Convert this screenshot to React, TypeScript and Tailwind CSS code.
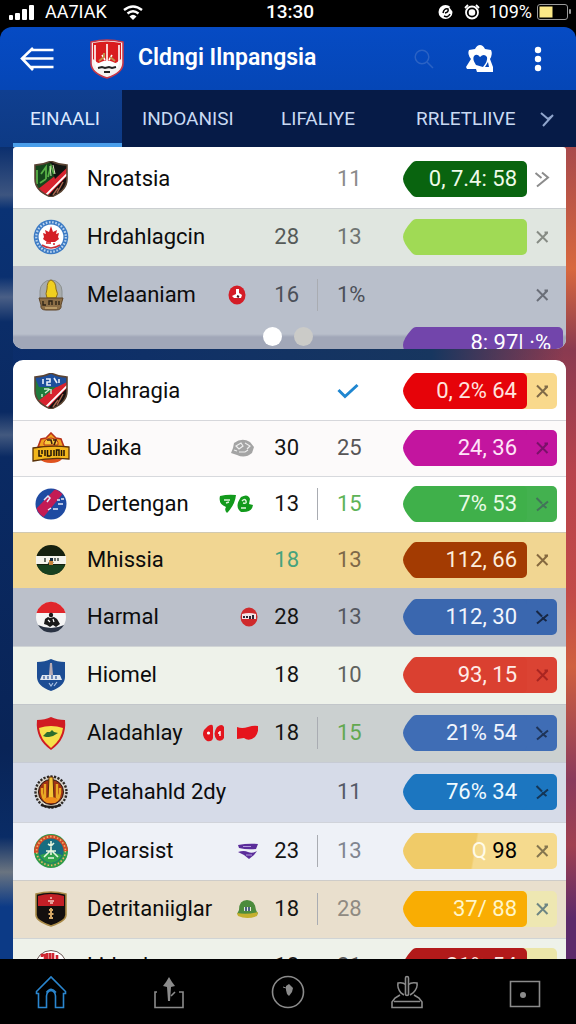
import type { ReactNode } from "react";

type Tail = "chevron" | "cross" | "arrow";

interface Row {
  name: string;
  crest: ReactNode;
  marks?: ReactNode;
  first?: string;
  firstClass?: string;
  second?: ReactNode;
  secondClass?: string;
  divider?: boolean;
  rowClass: string;
  pill?: ReactNode;
  tipClass?: string;
  pillClass?: string;
  tailClass?: string;
  tail: Tail;
  tailIconClass: string;
}

const shieldPath = "M2 4Q10 4 18 0Q26 4 34 4V18Q34 30 18 36Q2 30 2 18Z";

function StripedShield({ accent, children }: { accent: string; children: ReactNode }) {
  const id = "shield" + accent.slice(1);
  return (
    <svg viewBox="0 0 36 36" className="size-9" aria-hidden="true">
      <clipPath id={id}>
        <path d={shieldPath} />
      </clipPath>
      <g clipPath={"url(#" + id + ")"}>
        <path d="M0 0H36V36H0Z" fill={accent} />
        <path d="M36 6V36H8Z" fill="#17100f" />
        <path d="M36 4V13L14 36H4L0 32Z" fill="#d8232f" />
        <path d="M35 12L12 35" stroke="#fff" strokeWidth="1.8" />
        <path d="M30 21l-6 11M25 27l-5 7" stroke="#a8664e" strokeWidth="1.4" />
        {children}
      </g>
      <path d={shieldPath} fill="none" stroke="#5b4434" strokeWidth="1.6" />
    </svg>
  );
}

const crests = {
  green: (
    <StripedShield accent="#14461c">
      <path d="M16 0h20v5L22 18Z" fill="#131512" />
      <path d="M8 13l5-7v12M15 16l3-11 3 8M7 22l6-4M4 9v14" stroke="#58b048" strokeWidth="1.8" fill="none" />
      <path d="M17 5l1 10M20 4l2 9" stroke="#d6e4b8" strokeWidth="1" />
    </StripedShield>
  ),
  blue: (
    <StripedShield accent="#1f7a3c">
      <path d="M0 0h36v8L24 14H6Z" fill="#1e4f9c" />
      <path d="M10 6v5M13 6h4v3h-3v3h4M21 5l3 5M26 6v4" stroke="#e6eefa" strokeWidth="1.6" fill="none" />
      <path d="M11 16h5M12 20l5-4M18 16v5M9 21v3" stroke="#cdeccd" strokeWidth="1.4" />
    </StripedShield>
  ),
  maple: (
    <svg viewBox="0 0 36 36" className="size-9" aria-hidden="true">
      <circle cx="18" cy="18" r="17.3" fill="#3b7ac4" />
      <circle cx="18" cy="18" r="14.8" fill="none" stroke="#b9d3ee" strokeWidth="2.2" strokeDasharray="1.6 1.6" />
      <circle cx="18" cy="18" r="12.4" fill="#fff" />
      <path d="M18 7l2 6 4-2-1 4 3-1-1 4 1 2-4 3-8 0-4-3 1-2-1-4 3 1-1-4 4 2Z" fill="#d41f26" />
      <path d="M17 22v3M13 24h3M20 25h2" stroke="#d41f26" strokeWidth="1.6" />
      <path d="M9 26Q18 32 27 26" stroke="#c8323b" strokeWidth="1.6" fill="none" />
    </svg>
  ),
  cone: (
    <svg viewBox="0 0 36 36" className="size-9" aria-hidden="true">
      <path d="M7 22V14a11 11 0 0122 0v8Z" fill="#a8acac" stroke="#8c9190" />
      <path d="M18 3q5 2 5 9 3 5 0 9h-9q-2-4 0-9 0-8 4-9Z" fill="#f0cf1e" stroke="#8c6d18" />
      <path d="M6 21h24l-2 7q1 5-5 5H13q-6 0-5-5Z" fill="#8d6f47" stroke="#5e4528" />
      <path d="M10 24v4h3M16 28v-4h3v4M23 24v4M26 24v4" stroke="#2e2417" strokeWidth="1.4" fill="none" />
      <path d="M12 31h12" stroke="#c9a970" strokeWidth="1.3" />
    </svg>
  ),
  crown: (
    <svg viewBox="0 0 38 32" className="h-8 w-[38px]" aria-hidden="true">
      <path d="M19 1l5 5 5 1 3 8H6l3-8 5-1Z" fill="#f0a21e" stroke="#b8321b" strokeWidth="1.6" />
      <path d="M8 27h22q-3 4-11 4T8 27Z" fill="#e0531f" />
      <path d="M12 13q-1-6 7-7 8 1 7 7Z" fill="#f7c93b" stroke="#b8321b" />
      <path d="M15 8h4l1 4M21 8h3l-2 5" stroke="#3d1d10" strokeWidth="1.6" fill="none" />
      <path d="M1 16Q19 13 37 15V27Q19 25 1 29Z" fill="#f2b61c" stroke="#5a3209" strokeWidth="1.3" />
      <path d="M7 18v6h3M10 18v4M13 18v6M15.500 18v6h3M19 18v6M22 18v6M24.500 24v-6h2.500v6M29.500 18v6M32 18v6" stroke="#221407" strokeWidth="1.500" fill="none" />
    </svg>
  ),
  slash: (
    <svg viewBox="0 0 36 36" className="size-9" aria-hidden="true">
      <clipPath id="slashClip">
        <circle cx="18" cy="18" r="15" />
      </clipPath>
      <circle cx="18" cy="18" r="15.500" fill="#1f4ba2" />
      <g clipPath="url(#slashClip)">
        <path d="M25 0l7 5L9 33 0 26Z" fill="#c31b54" />
        <path d="M11 14l4-4 2 2-3 4M24 14h3M28 13h3M25 18h5M15 24l3-2M20 23h5" stroke="#e5e9f8" strokeWidth="1.500" fill="none" />
      </g>
    </svg>
  ),
  band: (
    <svg viewBox="0 0 36 36" className="size-9" aria-hidden="true">
      <circle cx="18" cy="18" r="15" fill="#16210f" />
      <path d="M4 23H32A15 15 0 0118 33 15 15 0 014 23Z" fill="#17401f" />
      <path d="M3 14H33V22H3Z" fill="#f5f3ec" />
      <path d="M12 16v4M15 21q4 2 5-1M22 16v3M25 16v3" stroke="#3d4a42" strokeWidth="1.500" fill="none" />
      <path d="M16 18h4v5h-4Z" fill="#c7843c" />
      <path d="M17 16h3v3h-3Z" fill="#152a3a" />
    </svg>
  ),
  redTop: (
    <svg viewBox="0 0 36 36" className="size-9" aria-hidden="true">
      <circle cx="18" cy="18" r="15" fill="#f5f5f5" />
      <path d="M3.500 14A15 15 0 0132.500 14Z" fill="#e0262b" />
      <path d="M5 26A15 15 0 0031 26Q18 32 5 26Z" fill="#2a3343" />
      <circle cx="18" cy="16" r="2.200" fill="#191919" />
      <path d="M12 20l3-2 2 1 4-1 3 2 3 5-4 3-3-2-3 2-3-2-3-1Z" fill="#191919" />
      <path d="M15 21l2 2M20 20l1 3" stroke="#fff" strokeWidth="1.200" />
    </svg>
  ),
  blueShield: (
    <svg viewBox="0 0 36 36" className="size-9" aria-hidden="true">
      <path d="M4 5Q12 5 18 2Q24 5 32 5V20Q32 29 18 34Q4 29 4 20Z" fill="#1c4d94" />
      <path d="M17 6h2l1 12h-4Z" fill="#b7abb4" />
      <path d="M9 18h18l2 5H7Z" fill="#dfe5ef" />
      <path d="M11 19v3M15 19v3M19 18v4M23 19v3" stroke="#4064a0" strokeWidth="1.4" />
      <path d="M16 26l2 3 2-3M24 25l-3 4" stroke="#a9c1e4" strokeWidth="1.2" fill="none" />
    </svg>
  ),
  redYellow: (
    <svg viewBox="0 0 36 36" className="size-9" aria-hidden="true">
      <path d="M4 5Q12 5 18 2Q24 5 32 5Q34 24 18 35Q2 24 4 5Z" fill="#d01b22" />
      <path d="M6 13Q18 9 30 13Q29 24 18 33Q7 24 6 13Z" fill="#f6e04a" />
      <path d="M10 21l4-4 3 0 2-2 2 2 4 1-5 3-4 1-3 0Z" fill="#2c6e2d" />
    </svg>
  ),
  torch: (
    <svg viewBox="0 0 36 36" className="size-9" aria-hidden="true">
      <circle cx="18" cy="18" r="15.500" fill="#d9d3c8" stroke="#2d2926" strokeWidth="2.400" strokeDasharray="2.200 1.400" />
      <circle cx="18" cy="18" r="12.500" fill="#a03214" stroke="#2b1a12" />
      <path d="M9 14q-1 11 6 14M27 14q1 11-6 14M12 10v14M24 10v14" stroke="#e9a824" strokeWidth="2.400" fill="none" />
      <path d="M16 3h4l1 22h-6Z" fill="#f5c535" stroke="#5a2711" />
      <path d="M11 25q7-4 14 0l-3 4h-8Z" fill="#f08d1b" />
      <path d="M8 31Q18 35 28 31" stroke="#211d1b" strokeWidth="2.400" fill="none" />
    </svg>
  ),
  greenRound: (
    <svg viewBox="0 0 36 36" className="size-9" aria-hidden="true">
      <circle cx="18" cy="18" r="17" fill="#2f9a48" />
      <path d="M1 20A17 17 0 0135 18Z" fill="#d34a28" />
      <circle cx="18" cy="18" r="14.400" fill="none" stroke="#efb56b" strokeWidth="1.600" strokeDasharray="1.500 2" />
      <circle cx="18" cy="18" r="12.500" fill="#176d80" />
      <path d="M7 22Q18 18 29 22Q26 29 18 30Q10 29 7 22Z" fill="#2fa24b" />
      <path d="M18 8v9M15 11l3 2 3-3M18 17l-7 7M18 17l7 7M18 17v5M13 18l10 0M15 25h6" fill="none" stroke="#e6f6dd" strokeWidth="1.600" />
    </svg>
  ),
  blackRed: (
    <svg viewBox="0 0 36 36" className="size-9" aria-hidden="true">
      <path d="M3 3Q18-1 33 3V24Q33 30 18 35Q3 30 3 24Z" fill="#130f0e" stroke="#a98a48" strokeWidth="1.600" />
      <path d="M5 5Q18 1 31 5V15H5Z" fill="#c21f26" />
      <path d="M15 10h6M17 7l2 0M17 12h3" stroke="#f3c9c0" strokeWidth="1.500" />
      <path d="M18 17v11M16 19h4M15.500 23h5M16 27h4" stroke="#d6a866" strokeWidth="2" />
    </svg>
  ),
  redWhite: (
    <svg viewBox="0 0 36 36" className="size-9" aria-hidden="true">
      <circle cx="18" cy="18" r="15.500" fill="#fff" stroke="#6b5753" />
      <path d="M9 9v-2h3v5M14 5v7h3V5M20 5v8h4V7" stroke="#cf2631" strokeWidth="2.600" fill="none" />
      <path d="M7 16h22v8H7Z" fill="#cf2631" />
    </svg>
  ),
};

const marks = {
  redDot: (
    <svg viewBox="0 0 18 20" className="mr-3 h-5 w-[18px]" aria-hidden="true">
      <ellipse cx="9" cy="10" rx="8.500" ry="9.500" fill="#d41c26" />
      <path d="M8 4h3v4l3 2-1 3H6L4 11l4-2Z" fill="#fff" />
      <path d="M9 11l2 1" stroke="#41141a" strokeWidth="2" />
    </svg>
  ),
  grayBall: (
    <svg viewBox="0 0 23 18" className="mr-1 h-[18px] w-[23px]" aria-hidden="true">
      <path d="M3 4Q11-2 19 3L23 8 21 14Q14 20 6 16L0 14 2 9Z" fill="#a4a4a4" />
      <path d="M5 7l5-3 2 3-4 3ZM14 4l5 3-3 3M8 13l6 0 3-2M3 11l3 1" stroke="#ededed" strokeWidth="1.200" fill="none" />
    </svg>
  ),
  greenPair: (
    <svg viewBox="0 0 35 20" className="mr-1 h-5 w-[35px]" aria-hidden="true">
      <path d="M1 2Q9 0 17 1Q16 11 8 19Q5 16 7 13Q-1 10 1 2Z" fill="#129a1c" />
      <path d="M5 6h6M7 9l3-1" stroke="#ddf4d8" strokeWidth="1.500" />
      <path d="M22 3Q29-1 31 5L30 10 34 11Q33 19 22 18Q15 13 22 3Z" fill="#129a1c" />
      <path d="M23 7q3-3 4 0t-3 2M22 14h5" stroke="#ddf4d8" strokeWidth="1.500" fill="none" />
    </svg>
  ),
  redBand: (
    <svg viewBox="0 0 18 20" className="h-5 w-[18px]" aria-hidden="true">
      <ellipse cx="9" cy="10" rx="8.500" ry="9.500" fill="#cf2a2c" />
      <path d="M2 7Q9 5 16 7V12H2Z" fill="#f2e4e6" />
      <path d="M3 10h2M6 10h2M10 9v3M13 8v4" stroke="#2c2735" strokeWidth="2" />
    </svg>
  ),
  redPair: (
    <svg viewBox="0 0 56 18" className="h-[18px] w-14" aria-hidden="true">
      <path d="M6 2Q11-1 11 3V14Q10 18 5 17Q-1 12 2 6Z" fill="#e3161e" />
      <path d="M15 3Q20-1 22 3V14Q20 18 15 16Q10 10 15 3Z" fill="#e3161e" />
      <circle cx="6.500" cy="9" r="1.600" fill="#fff" />
      <path d="M18 7v5M16 9l2 0" stroke="#fff" strokeWidth="1.400" />
      <path d="M35 3Q40 5 46 3T56 2Q57 8 53 13Q47 18 42 14L35 15Z" fill="#e6141c" />
    </svg>
  ),
  purple: (
    <svg viewBox="0 0 20 16" className="h-4 w-5" aria-hidden="true">
      <path d="M0 2Q10 0 20 1L18 6Q9 7 1 5ZM0 9Q6 7 10 9T19 8L16 12 11 16 6 12Z" fill="#5b2d9a" />
      <path d="M5 3.500h8M8 12h6" stroke="#b39cdc" strokeWidth="1" />
    </svg>
  ),
  greenCap: (
    <svg viewBox="0 0 21 20" className="h-5 w-[21px]" aria-hidden="true">
      <path d="M2 11Q2 1 10 1T19 11L21 15Q10 21 0 15Z" fill="#4c8b3d" />
      <path d="M0 14Q10 16 21 13L20 17Q10 21 1 17Z" fill="#c5b02f" />
      <path d="M7 8h7v4H7Z" fill="#e3ead9" />
      <path d="M9 8v4M12 8v4" stroke="#26416b" strokeWidth="1.600" />
    </svg>
  ),
};

const check = (
  <svg viewBox="0 0 22 16" className="h-4 w-[22px]" role="img" aria-label="Checked">
    <path d="M1.500 7L8 13.500 20.500 2" stroke="#1f86d0" strokeWidth="3" fill="none" />
  </svg>
);

const topRows: Row[] = [
  { name: "Nroatsia", crest: crests.green, second: "11", secondClass: "text-[#8a8a8a]", rowClass: "h-[58px] bg-white", pill: "0, 7.4: 58", tipClass: "text-[#09640f]", pillClass: "bg-[#09640f] text-[#effbe9]", tail: "chevron", tailIconClass: "text-[#8c8c8c]" },
  { name: "Hrdahlagcin", crest: crests.maple, first: "28", firstClass: "text-[#555a58]", second: "13", secondClass: "text-[#6f7472]", rowClass: "h-[58px] bg-[#e0e6e0]", pill: "", tipClass: "text-[#a0da55]", pillClass: "bg-[#a0da55]", tail: "cross", tailIconClass: "text-[#868b84]" },
  { name: "Melaaniam", crest: crests.cone, marks: marks.redDot, first: "16", firstClass: "text-[#4b4f58]", second: "1%", secondClass: "text-[#4b4f58]", divider: true, rowClass: "h-[58px] bg-[#b9bfcb]", tail: "cross", tailIconClass: "text-[#6a6e78]" },
];

const mainRows: Row[] = [
  { name: "Olahragia", crest: crests.blue, second: check, rowClass: "h-[58px] bg-white", pill: "0, 2% 64", tipClass: "text-[#e60309]", pillClass: "bg-[#e60309] text-[#ffe3df]", tailClass: "bg-[#f9d98c]", tail: "cross", tailIconClass: "text-[#7f6a48]" },
  { name: "Uaika", crest: crests.crown, marks: marks.grayBall, first: "30", second: "25", secondClass: "text-[#575556]", rowClass: "h-14 bg-[#fcfafa]", pill: "24, 36", tipClass: "text-[#c3159f]", pillClass: "bg-[#c3159f] text-[#ffe4f8]", tailClass: "bg-[#c3159f]", tail: "cross", tailIconClass: "text-[#7a1169]" },
  { name: "Dertengan", crest: crests.slash, marks: marks.greenPair, first: "13", second: "15", secondClass: "text-[#5db357]", divider: true, rowClass: "h-14 bg-white", pill: "7% 53", tipClass: "text-[#3fb04a]", pillClass: "bg-[#3fb04a] text-[#e9fbe6]", tailClass: "bg-[#43b14f]", tail: "arrow", tailIconClass: "text-[#43735a]" },
  { name: "Mhissia", crest: crests.band, first: "18", firstClass: "text-[#46a27d]", second: "13", secondClass: "text-[#7d6848]", rowClass: "h-14 bg-[#f1d692]", pill: "112, 66", tipClass: "text-[#a33b02]", pillClass: "bg-[#a33b02] text-[#fdeedd]", tail: "cross", tailIconClass: "text-[#85693f]" },
  { name: "Harmal", crest: crests.redTop, marks: marks.redBand, first: "28", second: "13", secondClass: "text-[#54575f]", rowClass: "h-[58px] bg-[#bbc0ca]", pill: "112, 30", tipClass: "text-[#3a67af]", pillClass: "bg-[#3a67af] text-[#f1f5fd]", tailClass: "bg-[#3a67af]", tail: "arrow", tailIconClass: "text-[#172643]" },
  { name: "Hiomel", crest: crests.blueShield, first: "18", second: "10", secondClass: "text-[#5f625e]", rowClass: "h-[58px] bg-[#eef2ea]", pill: "93, 15", tipClass: "text-[#da4030]", pillClass: "bg-[#da4030] text-[#ffece8]", tailClass: "bg-[#db4333]", tail: "cross", tailIconClass: "text-[#a92521]" },
  { name: "Aladahlay", crest: crests.redYellow, marks: marks.redPair, first: "18", second: "15", secondClass: "text-[#63a850]", divider: true, rowClass: "h-[58px] bg-[#cbd0d0]", pill: "21% 54", tipClass: "text-[#3f6db5]", pillClass: "bg-[#3f6db5] text-[#f1f5fd]", tailClass: "bg-[#3f6db5]", tail: "arrow", tailIconClass: "text-[#1e3357]" },
  { name: "Petahahld 2dy", crest: crests.torch, second: "11", secondClass: "text-[#545966]", rowClass: "h-[60px] bg-[#d6dbe8]", pill: "76% 34", tipClass: "text-[#1c76c0]", pillClass: "bg-[#1c76c0] text-[#effaff]", tailClass: "bg-[#1c76c0]", tail: "arrow", tailIconClass: "text-[#143555]" },
  { name: "Ploarsist", crest: crests.greenRound, marks: marks.purple, first: "23", second: "13", secondClass: "text-[#808590]", divider: true, rowClass: "h-[58px] bg-[#eef1f7]", pill: (<><span className="text-[#fffbe8]">Q</span> <span className="text-black">98</span></>), tipClass: "text-[#f0cb68]", pillClass: "bg-[linear-gradient(100deg,#f0cb68_60px,#f5da8e_62px)]", tailClass: "bg-[#f5da8e]", tail: "cross", tailIconClass: "text-[#84754f]" },
  { name: "Detritaniiglar", crest: crests.blackRed, marks: marks.greenCap, first: "18", second: "28", secondClass: "text-[#8f8a82]", divider: true, rowClass: "h-[58px] bg-[#e9dfcd]", pill: "37/ 88", tipClass: "text-[#f9ad03]", pillClass: "bg-[#f9ad03] text-[#fff5c8]", tailClass: "bg-[#eee7b2]", tail: "cross", tailIconClass: "text-[#6d8583]" },
  { name: "Lidard", crest: crests.redWhite, first: "18", second: "21", secondClass: "text-[#555]", rowClass: "h-14 bg-[#eef2ea]", pill: "21% 54", tipClass: "text-[#b21a1a]", pillClass: "bg-[#b21a1a] text-[#ffe3df]", tailClass: "bg-[#ebe6a8]", tail: "cross", tailIconClass: "text-[#77745a]" },
];

const tailPaths: Record<Tail, string> = {
  chevron: "M1.500 3L7.500 8M8 2.500L14 7.500 3 16.500",
  cross: "M3 3.500L13.500 14M13.500 4.500L3 15M10.500 4.500H14",
  arrow: "M2.500 3L8 8.500M14 6.500L3 15.500M8 9.500L12.500 13",
};

function TailIcon({ kind }: { kind: Tail }) {
  return (
    <svg viewBox="0 0 16 18" className="h-[18px] w-4" fill="none" stroke="currentColor" strokeWidth="2" aria-hidden="true">
      <path d={tailPaths[kind]} />
    </svg>
  );
}

function PillTip({ className }: { className: string }) {
  return (
    <svg viewBox="0 0 13 36" className={"h-9 w-[13px] shrink-0 " + className} aria-hidden="true">
      <path d="M13 0Q11 0 9 2Q0 12 0 18T9 34Q11 36 13 36Z" fill="currentColor" />
    </svg>
  );
}

function StandingsTable({ rows, label }: { rows: Row[]; label: string }) {
  return (
    <table aria-label={label} className="w-full table-fixed border-collapse text-[22px] leading-7">
      <colgroup>
        <col className="w-[74px]" />
        <col />
        <col className="w-[41px]" />
        <col className="w-[104px]" />
        <col className="w-[163px]" />
      </colgroup>
      <tbody>
        {rows.map((row) => (
          <tr key={row.name} className={"border-b border-[#bcc0c6]/60 last:border-b-0 " + row.rowClass}>
            <td className="p-0">
              <div className="flex w-[76px] justify-center">{row.crest}</div>
            </td>
            <th scope="row" className="p-0 text-left font-normal text-[#0c0c0c]">
              <div className="flex items-center justify-between whitespace-nowrap">
                <span>{row.name}</span>
                {row.marks}
              </div>
            </th>
            <td className={"p-0 text-right " + (row.firstClass ?? "text-[#151515]")}>{row.first}</td>
            <td className={"p-0 pl-[18px] " + (row.secondClass ?? "")}>
              <div className={"flex h-8 items-center border-l pl-[19px] " + (row.divider ? "border-[#a9acb2]" : "border-transparent")}>
                {row.second}
              </div>
            </td>
            <td className="p-0 pr-[9px]">
              <div className="flex h-9 justify-end">
                {row.tipClass && <PillTip className={row.tipClass} />}
                <div className={"flex flex-1 items-stretch justify-end rounded-r-[5px] " + (row.tailClass ?? "")}>
                  {row.tipClass && (
                    <span className={"flex-1 rounded-r-[5px] pr-[10px] text-right leading-9 whitespace-pre " + (row.pillClass ?? "")}>
                      {row.pill}
                    </span>
                  )}
                  <button type="button" aria-label={"Open " + row.name} className={"flex w-[30px] items-center justify-center " + row.tailIconClass}>
                    <TailIcon kind={row.tail} />
                  </button>
                </div>
              </div>
            </td>
          </tr>
        ))}
      </tbody>
    </table>
  );
}

function StatusBar() {
  return (
    <div className="flex h-[27px] shrink-0 items-center bg-black pr-1 pb-[3px] pl-2 text-[19px] leading-6 text-white">
      <div className="flex flex-1 items-center">
        <svg viewBox="0 0 26 17" className="h-[17px] w-[26px]" fill="currentColor" aria-hidden="true">
          <rect x="1" y="11" width="4" height="5" rx="1" />
          <rect x="7" y="9" width="5" height="7" rx="1" />
          <rect x="14" y="5" width="5" height="11" rx="1" />
          <rect x="21" y="1" width="5" height="15" rx="1" />
        </svg>
        <span className="ml-[11px] text-[18px]">AA7IAK</span>
        <svg viewBox="0 0 20 15" className="ml-4 h-[15px] w-5" fill="none" stroke="currentColor" strokeWidth="2.400" aria-hidden="true">
          <path d="M1 5Q10-2 19 5M4.500 8.500Q10 4 15.500 8.500" />
          <path d="M6.500 11.500Q10 8 13.500 11.500L10 15Z" fill="currentColor" stroke="none" />
        </svg>
      </div>
      <span className="font-medium">13:30</span>
      <div className="flex flex-1 items-center justify-end">
        <svg viewBox="0 0 16 16" className="size-4" aria-hidden="true">
          <circle cx="7.500" cy="8" r="7" fill="#fff" />
          <path d="M5 9q1-5 5-4 1 3-3 4M6 12q4 2 6-2M12 3l3 4" stroke="#000" strokeWidth="1.500" fill="none" />
        </svg>
        <svg viewBox="0 0 16 16" className="ml-[10px] size-4" fill="none" stroke="#fff" strokeWidth="1.800" aria-hidden="true">
          <circle cx="8" cy="8.500" r="6" />
          <circle cx="8" cy="8.500" r="2.400" fill="#fff" />
          <path d="M1 4l3-3M15 4l-3-3" />
        </svg>
        <span className="ml-2 text-[18px]">109%</span>
        <svg viewBox="0 0 35 16" className="ml-[5px] h-4 w-[35px]" aria-hidden="true">
          <rect x="0.500" y="0.500" width="30" height="15" rx="2.500" fill="none" stroke="#9a9a9a" />
          <rect x="2.500" y="2.500" width="13" height="11" fill="#fbe987" />
          <rect x="32" y="5" width="2" height="5" rx="1" fill="#9a9a9a" />
        </svg>
      </div>
    </div>
  );
}

function Header() {
  return (
    <header className="shrink-0 bg-black">
      <div className="flex h-[63px] items-center rounded-t-xl bg-gradient-to-b from-[#064bc4] to-[#0546b6] pr-[34px] pl-5 text-white">
        <button type="button" aria-label="Back" className="shrink-0">
          <svg viewBox="0 0 34 26" className="h-[26px] w-[34px]" fill="none" stroke="currentColor" strokeWidth="2.600" aria-hidden="true">
            <path d="M13 2L2 12.500 13 24M10 4H33.500M3 12.500H33.500M10 21H33.500" />
          </svg>
        </button>
        <svg viewBox="0 0 34 40" className="ml-9 h-10 w-[34px] shrink-0" role="img" aria-label="Club crest">
          <path d="M1 3Q17-1 33 3V24Q33 34 17 39Q1 34 1 24Z" fill="#f6f3f1" stroke="#c7384a" strokeWidth="1.600" />
          <path d="M3 4Q17 1 31 4V20Q23 28 17 22Q11 28 3 20Z" fill="#d91c1f" />
          <path d="M6 26Q17 17 28 26V29H6Z" fill="#fff" />
          <path d="M5 6v16Q6 28 10 30M29 6v16Q28 28 24 30M17 5v17M12 16l3 5M22 16l-3 5" stroke="#fff" strokeWidth="1.600" fill="none" />
          <path d="M9 22l5-4M20 18l5 4M14 14v4" stroke="#c2904a" strokeWidth="2" />
          <path d="M8 29l4-1 3 1 4-1 3 1 4-1M14 33h6" stroke="#222" strokeWidth="2" fill="none" />
        </svg>
        <h1 className="ml-[14px] flex-1 text-[23px] font-semibold whitespace-nowrap">Cldngi Ilnpangsia</h1>
        <button type="button" aria-label="Search" className="shrink-0 text-[#2b62c4]">
          <svg viewBox="0 0 20 20" className="size-5" fill="none" stroke="currentColor" strokeWidth="1.500" aria-hidden="true">
            <circle cx="8" cy="8" r="6.800" />
            <path d="M13 13l6 6" />
          </svg>
        </button>
        <button type="button" aria-label="Favourites" className="ml-8 shrink-0">
          <svg viewBox="0 0 28 28" className="size-7" aria-hidden="true">
            <path d="M14 0Q17 0 19 4L25 5Q27 9 24 14L27 22V27H11L10 24H1L0 22 5 14Q1 9 3 5L9 4Q11 0 14 0Z" fill="currentColor" />
            <path d="M8 11Q11 8 14 12Q18 8 21 12Q22 16 17 22L10 20Q6 14 8 11ZM22 17l-3 5 4 0Z" fill="#0548bb" />
          </svg>
        </button>
        <button type="button" aria-label="More options" className="ml-10 shrink-0">
          <svg viewBox="0 0 8 26" className="h-[26px] w-2" fill="currentColor" aria-hidden="true">
            <circle cx="4" cy="4" r="3.200" />
            <circle cx="4" cy="13" r="3.200" />
            <circle cx="4" cy="22" r="3.200" />
          </svg>
        </button>
      </div>
      <nav aria-label="Sections" className="flex h-[57px] bg-[#061b47] text-[19px] leading-6 text-[#c9daf3]">
        <a href="#einaau" className="flex w-[122px] flex-col bg-gradient-to-b from-[#103f90] to-[#0d3a85] text-[#dbe9ff]">
          <span className="flex flex-1 items-center pt-1 pl-[30px]">EINAALI</span>
          <span className="ml-[13px] h-1 bg-[#4a9eea]" />
        </a>
        <div className="grid flex-1 grid-cols-[139fr_135fr_138fr] items-center pr-[22px] pl-5">
          <a href="#indoanisi">INDOANISI</a>
          <a href="#lifaliye">LIFALIYE</a>
          <div className="flex items-center justify-between">
            <a href="#rrletliive">RRLETLIIVE</a>
            <svg viewBox="0 0 14 16" className="h-4 w-[14px] text-[#8fa5cc]" fill="none" stroke="currentColor" strokeWidth="2" aria-hidden="true">
              <path d="M1 2l7 6M13 4L3 15M8 8l4-3" />
            </svg>
          </div>
        </div>
      </nav>
    </header>
  );
}

function BottomNav() {
  return (
    <nav aria-label="Main" className="flex h-[65px] shrink-0 items-center justify-between bg-black px-[35px] text-[#8b8b8b]">
      <a href="#home" aria-label="Home" className="text-[#2a86cf]">
        <svg viewBox="0 0 32 34" className="h-[34px] w-8" fill="none" stroke="currentColor" strokeWidth="1.600" aria-hidden="true">
          <path d="M1.500 16.500L16 2 30.500 16.500V18.500H28.500V32.500H20.500V21Q20 16 16 15.500Q12 16 11.500 21V32.500H3.500V18.500H1.500Z" />
          <path d="M11.500 17.500Q16 11 21 17.500" />
        </svg>
      </a>
      <a href="#share" aria-label="Share">
        <svg viewBox="0 0 32 34" className="h-[34px] w-8" fill="none" stroke="currentColor" strokeWidth="1.600" aria-hidden="true">
          <path d="M4 17H2V32.500H30V17H26M18 21l4-4" />
          <path d="M16 2l3 5 3 4-4 1-1 14h-2l-1-14-4-1 3-4Z" fill="currentColor" stroke="none" />
        </svg>
      </a>
      <a href="#recent" aria-label="Recent">
        <svg viewBox="0 0 34 34" className="size-[34px]" fill="none" stroke="currentColor" strokeWidth="1.600" aria-hidden="true">
          <circle cx="17" cy="17" r="15.500" />
          <path d="M15 11l3-2 2 2 2 2-1 4-3 4-2-2-1-4Z" fill="currentColor" stroke="none" />
          <path d="M12 12l3 1" strokeWidth="1" />
        </svg>
      </a>
      <a href="#league" aria-label="League">
        <svg viewBox="0 0 32 34" className="h-[34px] w-8" fill="none" stroke="currentColor" strokeWidth="1.600" aria-hidden="true">
          <rect x="14.500" y="1.500" width="3" height="19" rx="1.500" />
          <path d="M14.500 9.500Q12 7 7 8Q6 13 10 18L13 20M17.500 9.500Q20 7 26 8Q27 13 22 18L19 20" />
          <path d="M9 20L4 23 1 27V32.500H31V27L28 23 23 20M3 26.500H29" />
        </svg>
      </a>
      <a href="#media" aria-label="Media">
        <svg viewBox="0 0 32 34" className="h-[34px] w-8" fill="none" stroke="currentColor" strokeWidth="1.600" aria-hidden="true">
          <path d="M1.500 6.500H30.500V31.500H1.500Z" />
          <circle cx="14" cy="20" r="3" fill="currentColor" stroke="none" />
        </svg>
      </a>
    </nav>
  );
}

export default function App() {
  return (
    <div className="flex h-screen flex-col overflow-hidden bg-black font-[Roboto,'Liberation_Sans',sans-serif]">
      <StatusBar />
      <Header />
      <main className="min-h-0 flex-1 overflow-y-auto bg-[linear-gradient(90deg,#0b2d6b_0%,#17365f_75%,transparent_98%),linear-gradient(180deg,#a84a4c_0%,#d8683e_15%,#8a3a50_25%,#b8434c_40%,#c24a48_55%,#d0603f_64%,#8a3a5c_78%,#a04050_86%,#5c2a6a_95%)] [scrollbar-width:none]">
        <div className="bg-[linear-gradient(180deg,#0b2f6e_0px,#3d5580_48px,#0a3274_62px,#0a3070_130px,#4a5f86_150px,#0b2d68_175px,#0a2a63_265px,#43597f_288px,#0a2a63_310px,#092457_600px,#0a2c66_690px,#6a7480_725px,#0c3a86_760px)] bg-[length:13px_100%] bg-no-repeat pr-[10px] pl-[13px]">
          <section className="overflow-hidden rounded-t-[3px] rounded-b-[10px] bg-white pt-[3px]">
            <StandingsTable rows={topRows} label="Leaders" />
            <div className="flex h-[25px] items-center justify-end overflow-hidden bg-[linear-gradient(180deg,#b9bfcb_10px,#a1a7b8_13px)]">
              <div className="mr-[90px] flex gap-3">
                <button type="button" aria-label="Page 1" aria-current="true" className="size-[19px] rounded-full bg-white" />
                <button type="button" aria-label="Page 2" className="size-[19px] rounded-full bg-[#cbcbc8]" />
              </div>
              <div className="mr-[3px] flex w-[160px] self-start pt-[3px]">
                <PillTip className="text-[#7245ab]" />
                <span className="h-9 flex-1 rounded-r-[5px] bg-[#7245ab] pr-3 text-right text-[22px] leading-8 text-white">8: 97| ·%</span>
              </div>
            </div>
          </section>
          <section className="mt-[11px] overflow-hidden rounded-[10px] bg-white pt-[2px]">
            <StandingsTable rows={mainRows} label="Standings" />
          </section>
        </div>
      </main>
      <BottomNav />
    </div>
  );
}
